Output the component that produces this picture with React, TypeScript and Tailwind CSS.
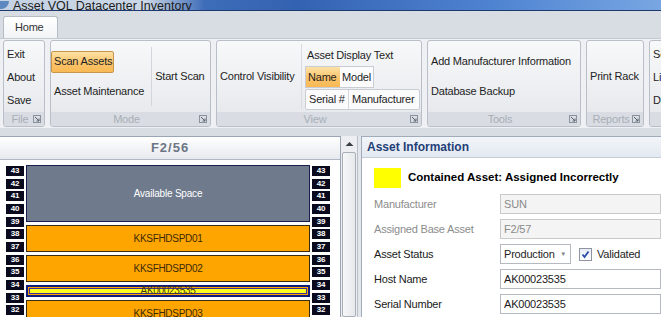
import React from 'react';

type Block = { label: string; units: number; kind: 'free' | 'asset' | 'selected' };

const blocks: Block[] = [
  { label: 'Available Space', units: 4, kind: 'free' },
  { label: 'KKSFHDSPD01', units: 2, kind: 'asset' },
  { label: 'KKSFHDSPD02', units: 2, kind: 'asset' },
  { label: 'AK00023535', units: 1, kind: 'selected' },
  { label: 'KKSFHDSPD03', units: 2, kind: 'asset' },
];

const units = [43, 42, 41, 40, 39, 38, 37, 36, 35, 34, 33, 32];

function Launcher() {
  return (
    <svg width="8" height="8" viewBox="0 0 8 8" className="shrink-0">
      <rect x="0.5" y="0.5" width="7" height="7" fill="none" stroke="#8a929c" />
      <path d="M2 2 L6 6 M6 3.5 V6 H3.5" stroke="#5a626c" fill="none" />
    </svg>
  );
}

function Group({ label, width, children, launcher = true }: { label: string; width: number; children: React.ReactNode; launcher?: boolean }) {
  return (
    <div
      className="flex flex-col rounded-[3px] border border-[#b9bfc8] bg-[linear-gradient(180deg,#f7f8f9_0%,#eceef1_60%,#e4e7eb_100%)] shrink-0 overflow-hidden"
      style={{ width }}
    >
      <div className="flex-1 flex">{children}</div>
      <div className="h-[14px] bg-[#d9dde3] flex items-center px-[3px] text-[11px] text-[#a8aeb6] leading-none">
        <span className="flex-1 text-center">{label}</span>
        {launcher && <Launcher />}
      </div>
    </div>
  );
}

function UnitLabels() {
  return (
    <div className="flex flex-col w-[18px] shrink-0">
      {units.map(u => (
        <div key={u} className="h-[15px] pt-[1px]">
          <div className="h-[10px] bg-[#0a0a1e] text-white text-[8px] font-bold leading-[10px] text-center tracking-[-0.3px]">
            {u}
          </div>
        </div>
      ))}
    </div>
  );
}

function RackBlock({ b }: { b: Block }) {
  const h = b.units * 15 - 3;
  if (b.kind === 'free') {
    return (
      <div className="shrink-0 border border-[#1b1f4f] bg-[#6f7b8d] flex items-center justify-center text-[10px] tracking-[-0.2px] text-white" style={{ height: h }}>
        {b.label}
      </div>
    );
  }
  if (b.kind === 'selected') {
    return (
      <div className="shrink-0 border-2 border-[#101c7c] bg-[#ffa500] p-[1px]" style={{ height: h }}>
        <div className="h-full bg-[#ffff22] border border-[#39309a] flex items-center justify-center text-[10px] tracking-[-0.3px] text-[#4a3a10] leading-none">
          {b.label}
        </div>
      </div>
    );
  }
  return (
    <div className="shrink-0 border border-[#3a2c12] bg-[#ffa500] flex items-center justify-center text-[10px] tracking-[-0.3px] text-[#3c2a06]" style={{ height: h }}>
      {b.label}
    </div>
  );
}

function Field({ label, value, disabled }: { label: string; value: string; disabled?: boolean }) {
  return (
    <div className="flex items-center h-[20px]">
      <span className={`w-[126px] shrink-0 ${disabled ? 'text-[#8c8c8c]' : 'text-[#1a1a1a]'}`}>{label}</span>
      <div
        className={`flex-1 h-[20px] border pl-[3px] flex items-center ${
          disabled ? 'border-[#c9c9c9] bg-[#f4f4f4] text-[#8a8a8a]' : 'border-[#b5b9c0] bg-white text-[#1a1a1a]'
        }`}
      >
        {value}
      </div>
    </div>
  );
}

export default function App() {
  return (
    <div className="w-[661px] h-[317px] overflow-hidden bg-[#d8dde4] font-['Liberation_Sans',Arial,sans-serif] text-[11px] tracking-[-0.2px] text-[#1e1e1e] flex flex-col whitespace-nowrap">
      {/* Title bar */}
      <div className="h-[11px] shrink-0 overflow-hidden border-b border-[#1d3a6e] bg-[linear-gradient(90deg,#c4d2e3_0%,#cbd7e6_22%,#3d6cb8_31%,#3462b2_45%,#4f84d2_75%,#78a6e2_100%)] flex items-end">
        <div className="w-[9px] h-[8px] mb-[1px] rounded-br-full bg-[#5d88bf]"></div>
        <span className="ml-[4px] text-[12.5px] tracking-[0px] leading-[14px] text-[#1c1c1c] -mb-[3px]">Asset VOL Datacenter Inventory</span>
      </div>

      {/* Tab row */}
      <div className="h-[27px] shrink-0 flex items-end px-[3px]">
        <div className="w-[55px] h-[22px] rounded-t-[3px] border border-b-0 border-[#b6bcc6] bg-[linear-gradient(180deg,#ffffff_0%,#f1f3f5_100%)] flex items-center pl-[11px] text-[#333]">
          Home
        </div>
      </div>

      {/* Ribbon */}
      <div className="h-[90px] shrink-0 bg-[#eef0f3] border-t border-[#c4cad2] flex gap-[5px] px-[3px] pt-[1px] pb-[1px]">
        <Group label="File" width={42}>
          <div className="flex flex-col justify-center pl-[3px] gap-[5px] leading-[18px]">
            <span>Exit</span>
            <span>About</span>
            <span>Save</span>
          </div>
        </Group>

        <Group label="Mode" width={161}>
          <div className="flex flex-col justify-center gap-[8px]">
            <div className="h-[22px] w-[63px] rounded-[2px] border border-[#c8964a] bg-[linear-gradient(180deg,#fde2a6_0%,#fbc36a_55%,#f9b955_100%)] flex items-center pl-[2px]">
              Scan Assets
            </div>
            <div className="h-[22px] flex items-center pl-[3px]">Asset Maintenance</div>
          </div>
          <div className="w-px bg-[#d2d6dc] my-[6px] ml-[7px]"></div>
          <div className="flex items-center pl-[3px]">Start Scan</div>
        </Group>

        <Group label="View" width={206}>
          <div className="flex items-center pl-[3px] w-[84px]">Control Visibility</div>
          <div className="w-px bg-[#d8dce1] my-[3px]"></div>
          <div className="flex flex-col pt-[3px] pl-[3px]">
            <div className="h-[22px] flex items-center pl-[2px]">Asset Display Text</div>
            <div className="flex h-[22px] w-[69px] border border-[#c9cdd3] bg-[#fbfbfc]">
              <div className="w-[34px] bg-[linear-gradient(180deg,#fde2a6_0%,#fbc36a_55%,#f9b955_100%)] flex items-center pl-[2px]">Name</div>
              <div className="flex items-center pl-[2px]">Model</div>
            </div>
            <div className="flex h-[21px] w-[115px] mt-[1px] border border-[#c9cdd3] bg-[#fbfbfc] rounded-[2px]">
              <div className="w-[43px] border-r border-[#d4d8dd] flex items-center pl-[3px]">Serial #</div>
              <div className="flex items-center pl-[3px]">Manufacturer</div>
            </div>
          </div>
        </Group>

        <Group label="Tools" width={154}>
          <div className="flex flex-col justify-center gap-[8px] pl-[3px]">
            <div className="h-[22px] flex items-center">Add Manufacturer Information</div>
            <div className="h-[22px] flex items-center">Database Backup</div>
          </div>
        </Group>

        <Group label="Reports" width={58}>
          <div className="flex items-center pl-[3px]">Print Rack</div>
        </Group>

        <Group label="" width={40} launcher={false}>
          <div className="flex flex-col justify-center pl-[3px] gap-[5px] leading-[18px]">
            <span>Settings</span>
            <span>License</span>
            <span>Data</span>
          </div>
        </Group>
      </div>

      {/* Main area */}
      <div className="flex-1 flex pt-[8px] min-h-0">
        {/* Rack panel */}
        <div className="w-[341px] shrink-0 flex flex-col border-t border-r border-[#9ba6b4] bg-white min-h-0">
          <div className="h-[23px] shrink-0 border-b border-[#b0b8c3] bg-[linear-gradient(180deg,#ffffff_0%,#f3f4f6_50%,#e6e9ed_100%)] flex items-center justify-center text-[13px] font-bold text-[#6c7684] tracking-[1px]">
            F2/56
          </div>
          <div className="flex gap-[2px] pl-[6px] pt-[5px] overflow-hidden">
            <UnitLabels />
            <div className="w-[284px] shrink-0 flex flex-col gap-[3px]">
              {blocks.map((b, i) => (
                <RackBlock key={i} b={b} />
              ))}
            </div>
            <UnitLabels />
          </div>
        </div>

        {/* Scrollbar */}
        <div className="w-[17px] shrink-0 bg-[#eceef1] border-r border-[#b8bec6] flex flex-col items-center">
          <svg width="9" height="6" viewBox="0 0 9 6" className="mt-[5px]">
            <path d="M0.5 5 L4.5 1 L8.5 5 Z" fill="#3a3f46" />
          </svg>
          <div className="mt-[5px] w-[14px] flex-1 rounded-[2px] border border-[#a9afb7] bg-[linear-gradient(90deg,#f5f6f7_0%,#e6e8eb_100%)]"></div>
        </div>

        {/* Splitter */}
        <div className="w-[3px] shrink-0 bg-[#e3e6ea]"></div>

        {/* Asset information */}
        <div className="flex-1 flex flex-col border-t border-l border-[#a1abb9] bg-white min-w-0">
          <div className="h-[21px] shrink-0 border-b border-[#c5ccd6] bg-[linear-gradient(180deg,#f2f5f9_0%,#e3e9f1_100%)] flex items-center pl-[5px] text-[12px] tracking-[0px] font-bold text-[#1f3e77]">
            Asset Information
          </div>
          <div className="flex flex-col pl-[12px] pt-[10px]">
            <div className="flex items-center gap-[7px] h-[20px]">
              <div className="w-[27px] h-[20px] bg-[#ffff00]"></div>
              <span className="text-[11.5px] tracking-[0px] font-bold text-black">Contained Asset: Assigned Incorrectly</span>
            </div>
            <div className="flex flex-col gap-[5px] mt-[6px]">
              <Field label="Manufacturer" value="SUN" disabled />
              <Field label="Assigned Base Asset" value="F2/57" disabled />
              <div className="flex items-center h-[20px]">
                <span className="w-[126px] shrink-0 text-[#1a1a1a]">Asset Status</span>
                <div className="w-[71px] h-[20px] border border-[#b5b9c0] bg-white flex items-center pl-[3px] pr-[4px] shrink-0">
                  <span className="flex-1">Production</span>
                  <span className="text-[6px] text-[#7a7f87]">▼</span>
                </div>
                <div className="ml-[8px] w-[13px] h-[13px] border border-[#8f95a0] bg-[linear-gradient(180deg,#e8ecf3_0%,#ffffff_100%)] flex items-center justify-center">
                  <svg width="9" height="9" viewBox="0 0 9 9">
                    <path d="M1.5 4.5 L3.5 7 L7.5 1.5" stroke="#2a4ea8" strokeWidth="1.8" fill="none" />
                  </svg>
                </div>
                <span className="ml-[5px]">Validated</span>
              </div>
              <Field label="Host Name" value="AK00023535" />
              <Field label="Serial Number" value="AK00023535" />
            </div>
          </div>
        </div>
      </div>
    </div>
  );
}
